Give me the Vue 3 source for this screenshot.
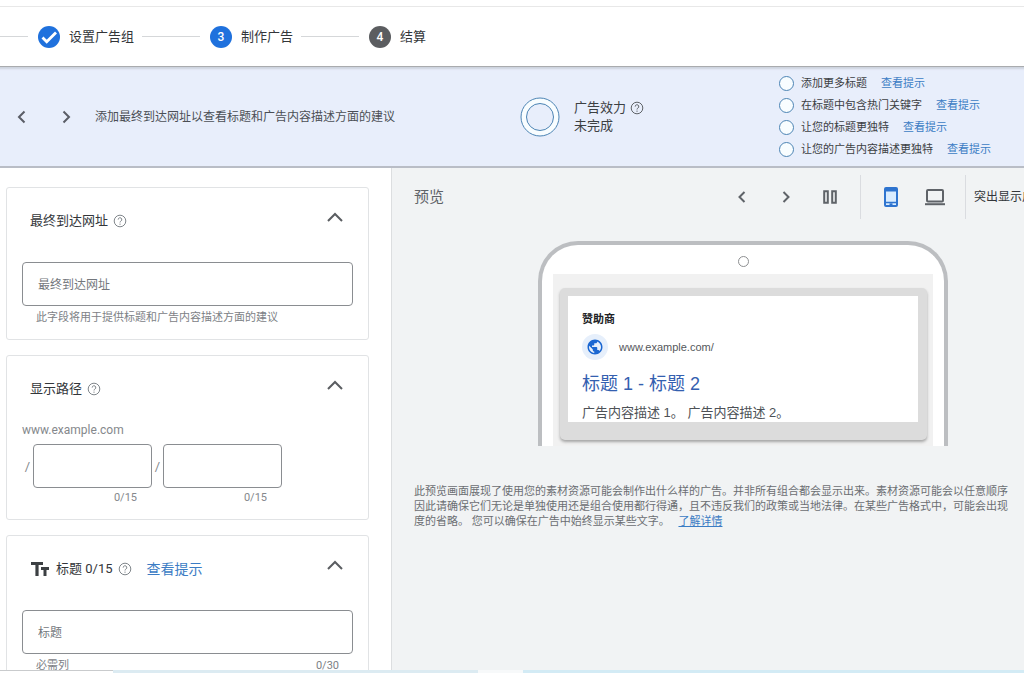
<script setup>
import { ref } from 'vue'

const finalUrl = ref('')
const path1 = ref('')
const path2 = ref('')
const headline = ref('')

const ideas = [
  '添加更多标题',
  '在标题中包含热门关键字',
  '让您的标题更独特',
  '让您的广告内容描述更独特',
]

const notes = [
  '此预览画面展现了使用您的素材资源可能会制作出什么样的广告。并非所有组合都会显示出来。素材资源可能会以任意顺序',
  '因此请确保它们无论是单独使用还是组合使用都行得通，且不违反我们的政策或当地法律。在某些广告格式中，可能会出现',
]
</script>

<template>
  <div class="page">
    <header class="steps">
      <span class="line short"></span>
      <span class="dot">
        <svg width="22" height="22" viewBox="0 0 22 22"><path d="M4.500 11.500l4.200 4.200L18 6.400" fill="none" stroke="#fff" stroke-width="2.800" /></svg>
      </span>
      <span class="step">设置广告组</span>
      <span class="line"></span>
      <span class="dot">3</span>
      <span class="step">制作广告</span>
      <span class="line"></span>
      <span class="dot grey">4</span>
      <span class="step">结算</span>
    </header>

    <section class="banner">
      <div class="advice">
        <button class="nav" aria-label="上一条"><svg width="20" height="20" viewBox="0 0 20 20"><path d="M12.500 4.500L7 10l5.500 5.500" /></svg></button>
        <button class="nav" aria-label="下一条"><svg width="20" height="20" viewBox="0 0 20 20"><path d="M7.500 4.500L13 10l-5.500 5.500" /></svg></button>
        <p>添加最终到达网址以查看标题和广告内容描述方面的建议</p>
      </div>
      <div class="strength">
        <svg width="40" height="40" viewBox="0 0 40 40" fill="#f8fdff" stroke="#4c84b4">
          <circle cx="20" cy="20" r="19" />
          <circle cx="20" cy="20" r="13.500" fill="#e8eefb" />
        </svg>
        <div>
          <div class="with-help">广告效力
            <svg class="help dark" width="14" height="14" viewBox="0 0 14 14"><circle cx="7" cy="7" r="5.800" /><path d="M5.200 5.600a1.800 1.800 0 1 1 2.700 1.500Q7 7.600 7 8.500M7 9.600v1.200" /></svg>
          </div>
          <div>未完成</div>
        </div>
      </div>
      <ul class="ideas">
        <li v-for="idea in ideas" :key="idea"><span class="ring"></span><span>{{ idea }}</span><a href="#">查看提示</a></li>
      </ul>
    </section>

    <main class="work">
      <div class="form">
        <section class="card">
          <div class="card-head">
            <label for="final-url">最终到达网址</label>
            <svg class="help" width="14" height="14" viewBox="0 0 14 14"><circle cx="7" cy="7" r="5.800" /><path d="M5.200 5.600a1.800 1.800 0 1 1 2.700 1.500Q7 7.600 7 8.500M7 9.600v1.200" /></svg>
            <button class="fold" aria-label="收起"><svg width="20" height="20" viewBox="0 0 20 20"><path d="M3 10L10 3l7 7" /></svg></button>
          </div>
          <input id="final-url" v-model="finalUrl" class="field" type="text" placeholder="最终到达网址" />
          <div class="hint"><span>此字段将用于提供标题和广告内容描述方面的建议</span></div>
        </section>

        <section class="card">
          <div class="card-head path-head">
            <span>显示路径</span>
            <svg class="help" width="14" height="14" viewBox="0 0 14 14"><circle cx="7" cy="7" r="5.800" /><path d="M5.200 5.600a1.800 1.800 0 1 1 2.700 1.500Q7 7.600 7 8.500M7 9.600v1.200" /></svg>
            <button class="fold" aria-label="收起"><svg width="20" height="20" viewBox="0 0 20 20"><path d="M3 10L10 3l7 7" /></svg></button>
          </div>
          <div class="domain">www.example.com</div>
          <div class="paths">
            <label class="slash" for="path-1">/</label>
            <div class="path"><input id="path-1" v-model="path1" class="field" type="text" /><div class="count">{{ path1.length }}/15</div></div>
            <label class="slash" for="path-2">/</label>
            <div class="path"><input id="path-2" v-model="path2" class="field" type="text" /><div class="count">{{ path2.length }}/15</div></div>
          </div>
        </section>

        <section class="card">
          <div class="card-head">
            <svg class="tt" width="20" height="16" viewBox="0 0 20 16"><path d="M1 1h12v3H8.600v11H5.400V4H1zM11 6h8v3h-2.500v6h-3V9H11z" fill="#3c4043" /></svg>
            <label for="headline">标题 0/15</label>
            <svg class="help" width="14" height="14" viewBox="0 0 14 14"><circle cx="7" cy="7" r="5.800" /><path d="M5.200 5.600a1.800 1.800 0 1 1 2.700 1.500Q7 7.600 7 8.500M7 9.600v1.200" /></svg>
            <a href="#" class="tips">查看提示</a>
            <button class="fold" aria-label="收起"><svg width="20" height="20" viewBox="0 0 20 20"><path d="M3 10L10 3l7 7" /></svg></button>
          </div>
          <input id="headline" v-model="headline" class="field" type="text" placeholder="标题" />
          <div class="hint"><span>必需列</span><span>{{ headline.length }}/30</span></div>
        </section>
      </div>

      <div class="preview">
        <div class="toolbar">
          <h2>预览</h2>
          <div class="tools">
            <button class="tool" aria-label="上一个"><svg width="20" height="20" viewBox="0 0 20 20"><path d="M12.500 5L7.500 10l5 5" /></svg></button>
            <button class="tool" aria-label="下一个"><svg width="20" height="20" viewBox="0 0 20 20"><path d="M7.500 5l5 5-5 5" /></svg></button>
            <button class="tool" aria-label="并排"><svg width="20" height="20" viewBox="0 0 20 20"><path d="M4.200 4.200h3.600v11.600H4.200zM12.200 4.200h3.600v11.600h-3.600z" /></svg></button>
            <span class="rule"></span>
            <button class="tool phone-tool" aria-label="移动设备"><svg width="22" height="22" viewBox="0 0 22 22"><rect x="5" y="2" width="12" height="18" rx="1" /><path d="M5 4h12" stroke-width="3" /><path d="M5 16.500h12M9.500 18.300h3" stroke-width="1.500" /></svg></button>
            <button class="tool" aria-label="桌面设备"><svg width="22" height="22" viewBox="0 0 22 22"><rect x="3" y="4" width="16" height="11.500" rx="1" /><path d="M1 18.200h20" /></svg></button>
            <span class="rule"></span>
            <span class="mark">突出显示广告</span>
          </div>
        </div>

        <div class="device">
          <div class="camera"></div>
          <div class="screen">
            <div class="frame">
              <article class="ad">
                <div class="sponsor">赞助商</div>
                <div class="site">
                  <span class="globe"><svg width="18" height="18" viewBox="0 0 24 24"><path fill="#1a67d2" d="M12 2C6.480 2 2 6.480 2 12s4.480 10 10 10 10-4.480 10-10S17.520 2 12 2zm-1 17.930c-3.950-.490-7-3.850-7-7.930 0-.620.080-1.210.210-1.790L9 15v1c0 1.100.900 2 2 2v1.930zm6.900-2.540c-.260-.810-1-1.390-1.900-1.390h-1v-3c0-.550-.450-1-1-1H8v-2h2c.550 0 1-.450 1-1V7h2c1.100 0 2-.900 2-2v-.410c2.930 1.190 5 4.060 5 7.410 0 2.080-.800 3.970-2.100 5.390z" /></svg></span>
                  <span>www.example.com/</span>
                </div>
                <a href="#" class="ad-title">标题 1 - 标题 2</a>
                <div class="ad-text">广告内容描述 1。 广告内容描述 2。</div>
              </article>
            </div>
          </div>
        </div>

        <div class="notes">
          <div v-for="note in notes" :key="note">{{ note }}</div>
          <div>度的省略。 您可以确保在广告中始终显示某些文字。 <a href="#">了解详情</a></div>
        </div>
      </div>
    </main>

    <footer class="taskbar"><span class="tab"></span><span class="glow"></span><span class="gap"></span><span class="glow wide"></span></footer>
  </div>
</template>

<style>
body { margin: 0; overflow: hidden; }
</style>

<style scoped>
.page {
  display: flex;
  flex-direction: column;
  height: 100vh;
  overflow: hidden;
  background: #fff;
  color: #3c4043;
  font-family: Roboto, "Noto Sans CJK SC", sans-serif;
  font-size: 13px;
  line-height: 18px;
}
.page * { box-sizing: border-box; }
a { color: #3b7cc4; text-decoration: none; }
button { padding: 0; border: 0; background: none; font: inherit; }
svg { display: block; flex: none; }
p, ul, h2 { margin: 0; padding: 0; font-weight: 400; }

.steps {
  display: flex;
  align-items: center;
  flex: none;
  height: 61px;
  margin-top: 6px;
  border-top: 1px solid #e8e8e8;
  border-bottom: 1px solid #a9abae;
}
.line { width: 58px; height: 1px; background: #d5d7d9; }
.short { width: 28px; }
.dot {
  display: grid;
  place-items: center;
  width: 22px;
  height: 22px;
  margin: 0 9px 0 10px;
  border-radius: 50%;
  background: #1f71dd;
  color: #fff;
  font-size: 12px;
  font-weight: 500;
}
.grey { background: #5b5d60; }
.step { margin-right: 8px; color: #33363a; white-space: nowrap; }

.banner {
  display: grid;
  grid-template-columns: 520fr 259fr 245fr;
  align-items: center;
  flex: none;
  height: 101px;
  border-bottom: 2px solid #b9bdc6;
  background: #e8eefb;
  box-shadow: inset 0 4px 2px -2px #cdd2de;
  white-space: nowrap;
}
.advice { display: flex; align-items: center; font-size: 12px; color: #4b4e55; }
.nav { margin: 0 12px; }
.nav + .nav { margin: 0 19px 0 12px; }
.nav path { fill: none; stroke: #5a5d66; stroke-width: 2; }
.strength { display: flex; align-items: center; gap: 14px; }
.with-help { display: flex; align-items: center; gap: 4px; }
.help { fill: none; stroke: #80868b; stroke-width: 1; }
.dark { stroke: #5f6368; }
.ideas { list-style: none; font-size: 11px; }
.ideas li { display: flex; align-items: center; height: 22px; }
.ring { width: 15px; height: 15px; margin-right: 7px; border: 1px solid #4c84b4; border-radius: 50%; background: #f8fdff; }
.ideas a { margin-left: 14px; }

.work { display: grid; grid-template-columns: 392px minmax(0, 1fr); flex: 1; min-height: 0; }
.form {
  display: flex;
  flex-direction: column;
  gap: 15px;
  min-height: 0;
  padding: 19px 22px 0 6px;
  border-right: 1px solid #dcdee0;
  overflow: hidden;
}
.card { flex: none; padding: 0 15px 12px; border: 1px solid #e1e3e5; border-radius: 3px; }
.card-head { display: flex; align-items: center; height: 66px; margin-bottom: 8px; padding: 0 8px; color: #33363a; }
.path-head { margin-bottom: 0; }
.card-head .help { margin-left: 5px; }
.fold { margin-left: auto; }
.fold path { fill: none; stroke: #5a5d61; stroke-width: 2; }
.field {
  display: block;
  width: 100%;
  height: 44px;
  padding: 2px 15px 0;
  border: 1px solid #8a8d91;
  border-radius: 4px;
  background: #fff;
  font: inherit;
  font-size: 12px;
  color: #3c4043;
}
.field::placeholder { color: #73777c; opacity: 1; }
.hint { display: flex; justify-content: space-between; padding: 3px 14px 0; font-size: 11px; color: #7d8186; }
.domain { margin-bottom: 6px; font-size: 12px; line-height: 16px; color: #85888c; }
.paths { display: flex; }
.slash { width: 11px; line-height: 45px; text-align: center; color: #85888c; }
.path { width: 119px; }
.count { padding: 1px 15px 0 0; text-align: right; font-size: 11px; color: #85888c; }
.tt { margin-right: 6px; }
.tips { margin-left: 15px; font-size: 14px; }

.preview { min-width: 0; overflow: hidden; background: #f1f3f4; white-space: nowrap; }
.toolbar { display: flex; align-items: center; height: 44px; margin-top: 7px; padding-left: 22px; }
h2 { flex: 1; font-size: 15px; color: #5f6368; }
.tools { display: flex; align-items: center; width: 304px; overflow: hidden; }
.tool { display: grid; place-items: center; flex: none; width: 44px; height: 44px; }
.tool svg { fill: none; stroke: #5f6368; stroke-width: 2; }
.phone-tool svg { fill: #d9ecff; stroke: #2f74cf; }
.rule { flex: none; width: 1px; height: 44px; margin: 0 8px; background: #dadce0; }
.mark { font-size: 12px; color: #33363a; }

.device {
  width: 410px;
  margin: 22px 76px 0 auto;
  padding: 11px 11px 0;
  border: 4px solid #bcbec1;
  border-bottom: 0;
  border-radius: 40px 40px 0 0;
  background: #fff;
}
.camera { width: 11px; height: 11px; margin: 0 auto; border: 1px solid #8d8f91; border-radius: 50%; }
.screen { margin-top: 7px; padding: 14px 6px 6px 7px; background: #f1f1f1; }
.frame { padding: 8px 9px 18px 8px; border-radius: 5px; background: #dcdcdc; box-shadow: 0 2px 3px #a5a5a5; }
.ad { height: 126px; padding: 14px 14px 0; overflow: hidden; background: #fff; font-family: "Liberation Sans", "Noto Sans CJK SC", sans-serif; }
.sponsor { font-size: 11px; font-weight: 700; color: #202124; }
.site { display: flex; align-items: center; gap: 11px; height: 26px; margin-top: 6px; font-size: 11px; color: #55585c; }
.globe { display: grid; place-items: center; width: 26px; height: 26px; border-radius: 50%; background: #e6effb; }
.ad-title { display: block; margin-top: 12px; font-size: 18px; line-height: 24px; color: #3460b0; }
.ad-text { margin-top: 8px; color: #4d5156; }

.notes { padding: 38px 0 0 22px; font-size: 11px; line-height: 15px; color: #6b6e72; }
.notes a { margin-left: 6px; text-decoration: underline; }

.taskbar { display: flex; flex: none; height: 3px; background: #fff; }
.tab { width: 113px; border-top: 1px solid #c9cbcd; }
.glow { flex: 365; background: #dcebf2; }
.gap { flex: 45; background: #f7f9fa; }
.wide { flex: 501; background: #d3ebf5; }
</style>
